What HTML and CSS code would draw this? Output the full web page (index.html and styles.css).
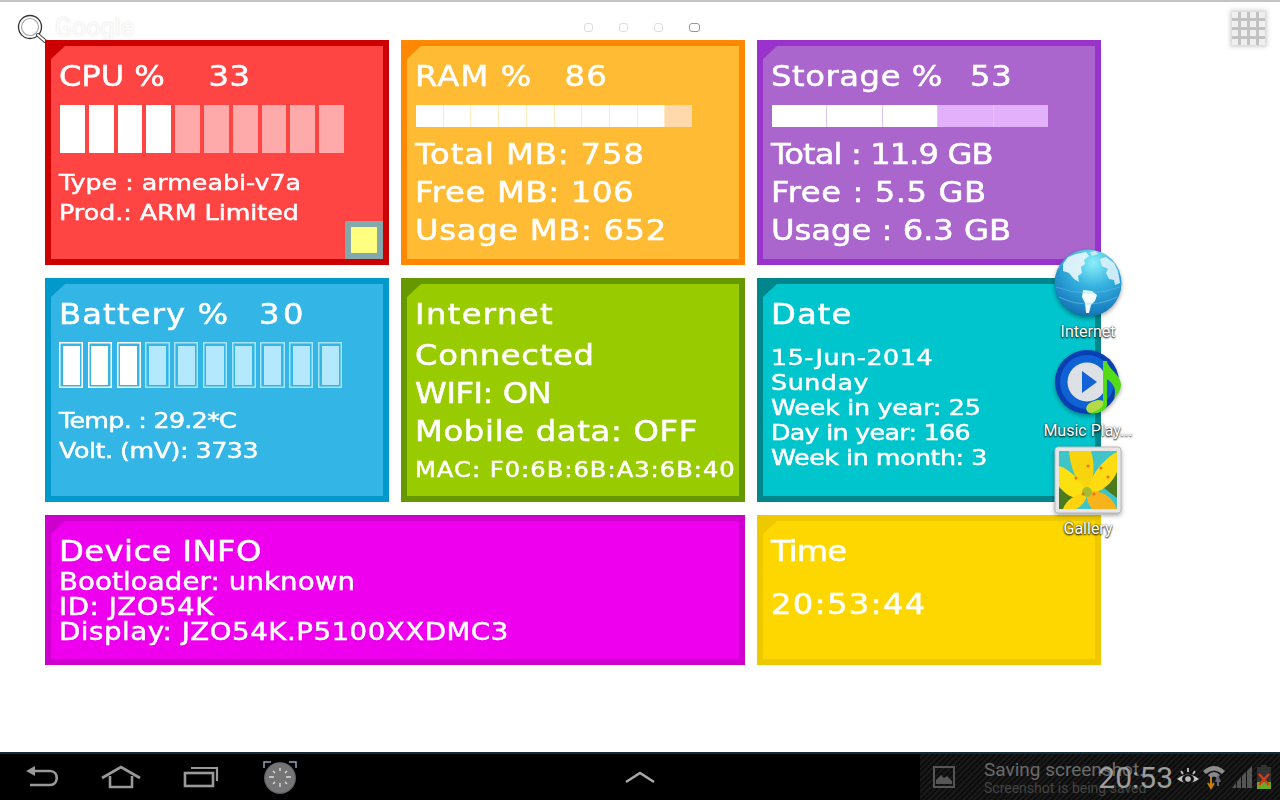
FILE: index.html
```html
<!DOCTYPE html>
<html lang="en">
<head>
<meta charset="utf-8">
<title>Device dashboard</title>
<link rel="stylesheet" href="styles.css">
</head>
<body>
<div class="screen">
  <header class="topbar">
    <div class="search">
      <svg class="search-icon" width="32" height="32" viewBox="0 0 32 32"><circle cx="15" cy="15" r="11.500" fill="#fff" stroke="#333" stroke-width="1.300"/><circle cx="15" cy="15" r="8.500" fill="#fff" stroke="#aaa" stroke-width="1.200"/><path d="M23 23 L30 29" stroke="#444" stroke-width="4" stroke-linecap="round"/><path d="M23 23 L30 29" stroke="#fff" stroke-width="2" stroke-linecap="round"/></svg>
      <span class="google">Google</span>
    </div>
    <div class="dots"><i class="dot"></i><i class="dot"></i><i class="dot"></i><i class="dot current"></i></div>
    <div class="apps"><div class="apps-grid"><i></i><i></i><i></i><i></i><i></i><i></i><i></i><i></i><i></i><i></i><i></i><i></i><i></i><i></i><i></i><i></i></div></div>
  </header>

  <main class="grid">
    <section class="card cpu">
      <div class="line title t4"><span class="label l-cpu">CPU %</span><span>33</span></div>
      <div class="bar bar-cpu"><i class="on"></i><i class="on"></i><i class="on"></i><i class="on"></i><i></i><i></i><i></i><i></i><i></i><i></i></div>
      <div class="line small">Type : armeabi-v7a</div>
      <div class="line small">Prod.: ARM Limited</div>
      <div class="chip"></div>
    </section>
    <section class="card ram">
      <div class="line title t10"><span class="label l-ram">RAM %</span><span>86</span></div>
      <div class="bar bar-ram"><i class="on"></i><i class="on"></i><i class="on"></i><i class="on"></i><i class="on"></i><i class="on"></i><i class="on"></i><i class="on"></i><i class="on"></i><i></i></div>
      <div class="line big">Total MB: 758</div>
      <div class="line big t6">Free MB: 106</div>
      <div class="line big t6">Usage MB: 652</div>
    </section>
    <section class="card storage">
      <div class="line title"><span class="label l-sto">Storage %</span><span>53</span></div>
      <div class="bar bar-sto"><i class="on"></i><i class="on"></i><i class="on"></i><i></i><i></i></div>
      <div class="line big tn8">Total : 11.9 GB</div>
      <div class="line big t5">Free : 5.5 GB</div>
      <div class="line big t0">Usage : 6.3 GB</div>
    </section>
    <section class="card battery">
      <div class="line title t10"><span class="label l-bat">Battery %</span><span class="wide">30</span></div>
      <div class="bar bar-bat"><i class="on"></i><i class="on"></i><i class="on"></i><i></i><i></i><i></i><i></i><i></i><i></i><i></i></div>
      <div class="line small tn6">Temp. : 29.2*C</div>
      <div class="line small tn4">Volt. (mV): 3733</div>
    </section>
    <section class="card internet">
      <div class="line title t12">Internet</div>
      <div class="line big first t6">Connected</div>
      <div class="line big tn4">WIFI: ON</div>
      <div class="line big t6">Mobile data: OFF</div>
      <div class="line mac">MAC: F0:6B:6B:A3:6B:40</div>
    </section>
    <section class="card date">
      <div class="line title t10">Date</div>
      <div class="dlist">
        <div class="line tiny t5">15-Jun-2014</div>
        <div class="line tiny t5">Sunday</div>
        <div class="line tiny tn2">Week in year: 25</div>
        <div class="line tiny tn6">Day in year: 166</div>
        <div class="line tiny tn4">Week in month: 3</div>
      </div>
    </section>
    <section class="card device">
      <div class="line title t4">Device INFO</div>
      <div class="line tiny dev t1">Bootloader: unknown</div>
      <div class="line tiny dev">ID: JZO54K</div>
      <div class="line tiny dev">Display: JZO54K.P5100XXDMC3</div>
    </section>
    <section class="card time">
      <div class="line title tn8">Time</div>
      <div class="line title clock t12">20:53:44</div>
    </section>
  </main>

  <div class="shortcut sc-internet">
    <svg width="68" height="68" viewBox="0 0 68 68">
      <defs>
        <radialGradient id="gl" cx="0.58" cy="0.2" r="0.9"><stop offset="0" stop-color="#8cf0f8"/><stop offset="0.4" stop-color="#35b2e0"/><stop offset="0.8" stop-color="#1a80c0"/><stop offset="1" stop-color="#0e5f9f"/></radialGradient>
      </defs>
      <circle cx="34" cy="34" r="33.500" fill="url(#gl)"/>
      <path d="M9 15 L14 8 L22 5 L32 3 L35 7 L30 11 L31 15 L27 18 L28 24 L24 27 L25 33 L20 30 L15 24 L9 22 Z" fill="#e6f5fb" opacity=".92"/>
      <path d="M46 10 L52 8 L60 14 L64 22 L66 34 L61 36 L60 31 L55 30 L52 24 L54 20 L48 17 Z" fill="#dff2fa" opacity=".88"/>
      <path d="M29 41 L38 42 L43 46 L41 52 L37 56 L35 64 L32 64 L31 54 L28 48 Z" fill="#f2fbfe"/>
      <path d="M36 3 L42 2 L44 5 L38 7 Z" fill="#c9ecf7"/>
      <path d="M5 48 Q34 62 63 48" fill="none" stroke="#7cc9ea" stroke-width="1.200" opacity=".5"/>
      <path d="M2 38 Q34 50 66 38" fill="none" stroke="#7cc9ea" stroke-width="1" opacity=".4"/>
    </svg>
    <span class="sc-label">Internet</span>
  </div>
  <div class="shortcut sc-music">
    <svg width="68" height="68" viewBox="0 0 68 68">
      <circle cx="33" cy="34" r="32" fill="#0a3fb4"/>
      <circle cx="33" cy="34" r="27" fill="#0e62d4"/>
      <circle cx="33" cy="34" r="19.500" fill="#dde1e6"/>
      <path d="M28 23 L43 34 L28 45 Z" fill="#1263d8"/>
      <path d="M49 13 L53 13 C54 21 66 26 67 36 C67 42 64 46 60 50 C63 41 59 35 53 31 L53 57 C52 63 42 67 36 65 C30 63 32 56 38 54 C42 52 46 52 49 53 Z" fill="#55dc18"/>
      <path d="M38 54 C42 52 46 52 49 53 L49 57 C46 62 40 64 36 65 C30 63 32 56 38 54 Z" fill="#b6d94a"/>
    </svg>
    <span class="sc-label">Music Play...</span>
  </div>
  <div class="shortcut sc-gallery">
    <svg width="68" height="68" viewBox="0 0 68 68">
      <rect x="1" y="1" width="66" height="66" rx="3" fill="#e6e6e6" stroke="#bbb"/>
      <rect x="5" y="5" width="58" height="58" fill="#3fc4c8"/>
      <path d="M5 42 L22 48 L20 63 L5 63 Z" fill="#4c7a1e"/>
      <path d="M63 24 L50 42 L63 52 Z" fill="#4c7a1e"/>
      <path d="M15 5 L37 5 C41 18 41 32 33 47 C22 36 16 20 15 5 Z" fill="#f7d40e"/>
      <path d="M63 6 L63 26 C58 38 46 48 33 47 C36 30 48 14 63 6 Z" fill="#ffdb12"/>
      <path d="M5 20 C16 23 28 36 33 47 C22 56 12 50 5 40 Z" fill="#fde010"/>
      <path d="M33 47 C46 42 58 50 63 63 L38 63 C34 58 32 52 33 47 Z" fill="#f8b21b"/>
      <path d="M33 47 C33 54 28 60 22 63 L9 63 C12 54 22 47 33 47 Z" fill="#ffd40e"/>
      <circle cx="33" cy="46" r="5" fill="#a7bd30"/>
      <g fill="#e8731a"><circle cx="34" cy="20" r="1.500"/><circle cx="47" cy="22" r="1.500"/><circle cx="22" cy="32" r="1.500"/><circle cx="54" cy="31" r="1.500"/><circle cx="29" cy="48" r="1.500"/><circle cx="40" cy="48" r="1.500"/></g>
    </svg>
    <span class="sc-label">Gallery</span>
  </div>

  <footer class="navbar">
    <div class="navkeys">
      <svg class="key-back" width="36" height="26" viewBox="0 0 36 26"><path d="M2 7 L11 2 L11 12 Z" fill="#999"/><path d="M9 7 H26 C35 7 35 21 26 21 H6" fill="none" stroke="#999" stroke-width="2.600"/></svg>
      <svg class="key-home" width="42" height="26" viewBox="0 0 42 26"><path d="M2 14 L21 3 L40 14" fill="none" stroke="#999" stroke-width="2.800"/><path d="M10 12 V23 H32 V12" fill="none" stroke="#999" stroke-width="2.600"/></svg>
      <svg class="key-recent" width="36" height="26" viewBox="0 0 36 26"><rect x="2" y="9" width="28" height="13" fill="none" stroke="#999" stroke-width="2.600"/><path d="M8 4 H34 V17" fill="none" stroke="#999" stroke-width="2.200"/></svg>
      <svg class="key-shot" width="36" height="34" viewBox="0 0 36 34"><circle cx="18" cy="18" r="16" fill="#b0b6cc" opacity=".5"/><circle cx="18" cy="18" r="15" fill="#757575"/><path d="M2 8 V2 H9 M27 2 H34 V8" fill="none" stroke="#9aa0b4" stroke-width="1.500"/><g stroke="#dcdcdc" stroke-width="1.400"><path d="M18 8 V11 M18 23 V27 M7 17 H12 M24 17 H29 M11 11 L13 13 M25 11 L23 13 M11 24 L13 22 M25 24 L23 22"/></g></svg>
    </div>
    <div class="chevron-wrap">
      <svg width="32" height="14" viewBox="0 0 32 14"><path d="M2 12 L16 3 L30 12" fill="none" stroke="#aaa" stroke-width="2.400"/></svg>
    </div>
    <div class="status">
      <svg class="pic-icon" width="22" height="22" viewBox="0 0 22 22"><rect x="1" y="1" width="20" height="20" fill="none" stroke="#555" stroke-width="2"/><path d="M3 18 V14 L8 9 L11 12 L14 10 L19 15 V18 Z" fill="#555"/></svg>
      <div class="ticker">
        <div class="tick-main">Saving screenshot...</div>
        <div class="tick-sub">Screenshot is being saved</div>
      </div>
      <div class="sys">
        <span class="clocktext">20:53</span>
        <svg class="eye" width="22" height="20" viewBox="0 0 22 20"><path d="M0 12 Q11 3 22 12 Q11 20 0 12 Z" fill="#c4c4c4"/><ellipse cx="11" cy="12" rx="6" ry="4.500" fill="#111"/><circle cx="11" cy="12" r="2.800" fill="#bbb"/><path d="M4 4 L6 7 M11 1 V5 M18 4 L16 7" stroke="#c4c4c4" stroke-width="1.800"/></svg>
        <svg width="22" height="26" viewBox="0 0 22 26"><path d="M0 7 Q11 -3 22 7 L19 10 Q11 3 3 10 Z M5 11 Q11 5 17 11 L14 14 Q11 11 8 14 Z" fill="#8b8b8b"/><path d="M8 13 V22 M5 19 L8 24 L11 19" stroke="#c47f17" stroke-width="2" fill="none"/><path d="M15 22 V15 M13 18 L15 13 L17 18" stroke="#667" stroke-width="2" fill="none"/></svg>
        <svg class="sig" width="20" height="22" viewBox="0 0 20 22"><g fill="#555"><path d="M0 22 L4 17 V22 Z"/><path d="M5 22 V16 L9 11 V22 Z"/><path d="M10 22 V10 L14 6 V22 Z"/><path d="M15 22 V5 L20 0 V22 Z"/></g></svg>
        <svg width="14" height="24" viewBox="0 0 14 24"><rect x="4" y="0" width="6" height="3" fill="#333"/><rect x="0" y="2" width="14" height="22" fill="#333"/><rect x="0" y="17" width="14" height="7" fill="#6ca824"/><path d="M2 9 L12 20 M12 9 L2 20" stroke="#d23b1c" stroke-width="2.500"/></svg>
      </div>
    </div>
  </footer>
</div>
</body>
</html>
```
FILE: styles.css
```css
* { box-sizing: border-box; }
html, body { margin: 0; padding: 0; }
body { background: #fff; font-family: "DejaVu Sans", sans-serif; overflow: hidden; }
.screen { width: 1280px; height: 800px; display: flex; flex-direction: column; position: relative; border-top: 2px solid #c4c4c4; }

.topbar { height: 38px; display: grid; grid-template-columns: 1fr auto 1fr; align-items: start; flex: none; }
.search { display: flex; align-items: flex-start; padding: 10px 0 0 15px; height: 38px; }
.search-icon { flex: none; }
.google { font-family: "Roboto", sans-serif; font-size: 25px; line-height: 32px; color: #fafafa; text-shadow: 0 0 2px #e0e0e0; margin-left: 8px; }
.dots { display: flex; gap: 26px; padding-top: 21px; margin-left: 3px; }
.dot { display: block; width: 9px; height: 9px; border: 1px solid #ddd; border-radius: 3px; }
.dot.current { width: 11px; border: 1.500px solid #999; }
.apps { display: flex; justify-content: flex-end; padding: 10px 15px 0 0; }
.apps-grid { width: 33px; height: 33px; display: grid; grid-template-columns: repeat(4, 6px); grid-auto-rows: 6px; gap: 3px; background: #c2c2c2; box-shadow: 0 0 4px 2px #d2d2d2; }
.apps-grid i { display: block; background: #efefef; }

.grid { display: grid; grid-template-columns: repeat(3, 344px); grid-template-rows: 225px 224px 150px; column-gap: 12px; row-gap: 13px; padding-left: 45px; flex: none; }
.card { position: relative; border: 6px solid; padding: 12px 0 0 8px; color: #fff; overflow: hidden; -webkit-text-stroke: 0.5px #fff; }
.card::before { content: ""; position: absolute; left: 0; top: 0; width: 14px; height: 13px; background: var(--edge); clip-path: polygon(0 0, 100% 0, 0 100%); }
.cpu { background: #ff4444; border-color: #cc0000; --edge: #cc0000; }
.ram { background: #ffbb33; border-color: #ff8800; --edge: #ff8800; }
.storage { background: #aa66cc; border-color: #9933cc; --edge: #9933cc; }
.battery { background: #33b5e5; border-color: #0099cc; --edge: #0099cc; }
.internet { background: #99cc00; border-color: #669900; --edge: #669900; }
.date { background: #00c5cd; border-color: #00868b; --edge: #00868b; }
.device { grid-column: 1 / span 2; background: #ee00ee; border-color: #cd00cd; --edge: #cd00cd; }
.time { background: #ffd700; border-color: #eec900; --edge: #eec900; }

.line { white-space: nowrap; display: flex; transform: scaleX(1.15); transform-origin: left center; }
.title { font-size: 28px; line-height: 38px; height: 36px; letter-spacing: 0.8px; }
.label { display: block; }
.l-cpu { width: 130px; letter-spacing: -0.1px; }
.l-ram { width: 130px; }
.l-sto { width: 173px; letter-spacing: 0.5px; }
.l-bat { width: 174px; }
.wide { letter-spacing: 3px; }
.big { font-size: 28px; line-height: 40px; height: 38px; letter-spacing: 0.8px; }
.small { font-size: 22px; line-height: 32px; height: 30px; letter-spacing: 0; }
.tiny { font-size: 22px; line-height: 25px; height: 25px; }
.mac { font-size: 21px; line-height: 38px; height: 38px; margin-top: 1px; letter-spacing: 0.9px; }
.first { margin-top: 4px; }
.dlist { margin-top: 13px; }
.dev { font-size: 24px; line-height: 27px; letter-spacing: 0.47px; }
.clock { margin-top: 17px; }

.tn8 { letter-spacing: -0.8px; }
.tn6 { letter-spacing: -0.6px; }
.tn4 { letter-spacing: -0.4px; }
.tn2 { letter-spacing: -0.2px; }
.t0 { letter-spacing: 0; }
.t1 { letter-spacing: 0.1px; }
.t4 { letter-spacing: 0.4px; }
.t5 { letter-spacing: 0.5px; }
.t6 { letter-spacing: 0.6px; }
.t10 { letter-spacing: 1px; }
.t12 { letter-spacing: 1.2px; }

.bar { display: grid; }
.bar i { display: block; }
.bar-cpu { grid-template-columns: repeat(10, 1fr); gap: 4px; width: 284px; height: 48px; margin: 11px 0 14px 1px; }
.bar-cpu i { background: #ffaaaa; }
.bar-cpu i.on { background: #fff; }
.bar-ram, .bar-sto { height: 22px; width: 276px; margin: 11px 0 8px 1px; gap: 1px; }
.bar-ram { grid-template-columns: repeat(10, 1fr); background: #ffe9c0; }
.bar-ram i { background: #ffd8ac; }
.bar-ram i.on { background: #fff; }
.bar-sto { grid-template-columns: repeat(5, 1fr); background: #e0c8ec; }
.bar-sto i { background: #e3b0fb; }
.bar-sto i.on { background: #fff; }
.bar-bat { grid-template-columns: repeat(10, 24.2px); column-gap: 4.6px; height: 46px; margin: 10px 0 17px 0; }
.bar-bat i { background: #33b5e5; box-shadow: inset 0 0 0 1.5px #a8e4fa; padding: 3.5px; }
.bar-bat i::after { content: ""; display: block; height: 100%; background: #b3e8fd; }
.bar-bat i.on { box-shadow: inset 0 0 0 1.5px #fff; }
.bar-bat i.on::after { background: #fff; }

.chip { position: absolute; right: 0; bottom: 0; width: 38px; height: 38px; border: 6px solid #83a9ad; background: #ffff80; }

.shortcut { position: absolute; width: 100px; display: flex; flex-direction: column; align-items: center; left: 1038px; }
.sc-internet { top: 247px; }
.sc-music { top: 346px; }
.sc-gallery { top: 444px; }
.shortcut svg { display: block; filter: drop-shadow(0 2px 2px rgba(0,0,0,.35)); }
.sc-label { font-family: "Roboto", sans-serif; font-size: 16px; line-height: 18px; color: #fff; text-shadow: 0 1px 2px #000, 0 0 2px rgba(0,0,0,.6); margin-top: 6px; white-space: nowrap; }

.navbar { margin-top: auto; height: 48px; flex: none; background: #000; border-top: 2px solid #0f2b38; display: grid; grid-template-columns: 1fr auto 1fr; align-items: center; position: relative; }
.navkeys { display: flex; align-items: center; padding-left: 24px; gap: 0; }
.key-back { margin-right: 40px; }
.key-home { margin-right: 41px; }
.key-recent { margin-right: 43px; }
.chevron-wrap { display: flex; align-items: center; }
.status { height: 46px; width: 360px; justify-self: end; display: flex; align-items: center; padding-left: 13px; position: relative; background: repeating-linear-gradient(135deg, #0d0d0d 0 2px, #191919 2px 4px); }
.pic-icon { flex: none; margin-right: 29px; }
.ticker { font-family: "Roboto", sans-serif; }
.tick-main { font-size: 19px; line-height: 21px; color: #6a6a6a; white-space: nowrap; }
.tick-sub { font-size: 14px; line-height: 16px; color: #444; white-space: nowrap; }
.sys { position: absolute; right: 9px; top: 0; height: 46px; display: flex; align-items: center; gap: 5px; }
.sig { margin-left: 2px; }
.eye { margin-right: -1px; }
.clocktext { font-family: "Roboto", sans-serif; font-size: 30px; color: #9d9d9d; margin-right: -1px; }
```
